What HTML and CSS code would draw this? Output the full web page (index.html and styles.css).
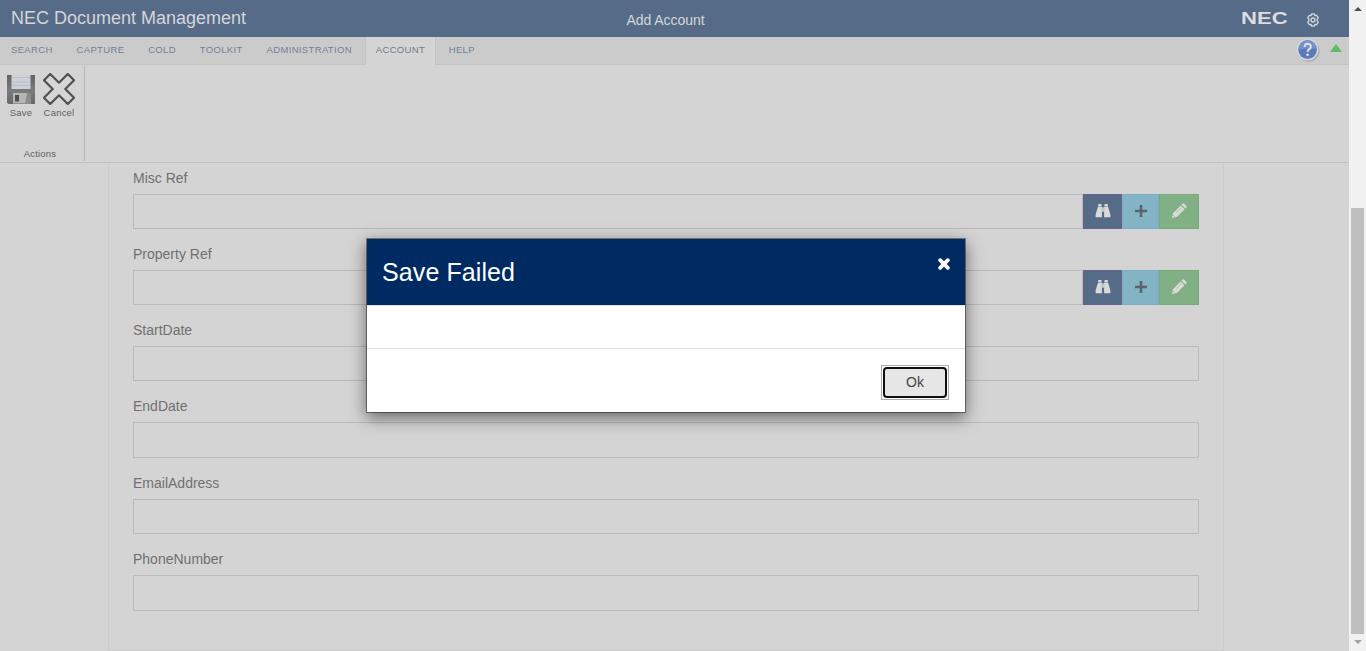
FILE: index.html
```html
<!DOCTYPE html>
<html lang="en">
<head>
<meta charset="utf-8">
<title>Add Account</title>
<link rel="stylesheet" href="styles.css">
</head>
<body>
<svg class="defs" width="0" height="0">
  <symbol id="binoculars" viewBox="0 0 16 14">
    <path fill="currentColor" d="M3.200 0h3.300v2H3.200zM9.500 0h3.300v2H9.500zM3 2.500h3.900V13.200H.600V10.500zM9.100 2.500H13L15.400 10.500v2.700H9.100zM7.200 3.200h1.600v4.600H7.200z"/>
  </symbol>
  <symbol id="plus" viewBox="0 0 12 12"><path fill="currentColor" d="M4.700 0h2.600v4.700H12v2.600H7.300V12H4.700V7.300H0V4.700h4.700z"/></symbol>
  <symbol id="pencil" viewBox="0 0 16 16">
    <path fill="currentColor" d="M1 15l1-4.800L9.700 2.500l3.800 3.800L5.800 14zM10.500 1.700l1-1q.9-.7 1.800.1l1.900 1.900q.8.900.1 1.800l-1 1z"/>
    <path d="M5.500 9.700L10 5.200" stroke="#82b085" stroke-width=".6"/>
    <path d="M2.200 12.200l1.600 1.600" stroke="#82b085" stroke-width=".8"/>
  </symbol>
</svg>
<div class="window">
  <div class="app">
    <header class="topbar">
      <div class="brand">NEC Document Management</div>
      <div class="page-title">Add Account</div>
      <div class="top-right">
        <span class="logo">NEC</span>
        <svg class="gear" viewBox="0 0 14 14" width="14" height="14" fill="none" stroke="currentColor" stroke-width="1.300" stroke-linejoin="round">
          <path d="M5.500 1h3l.5 1.700 1.700-.4 1.600 2.600L11.100 6.200v1.600l1.200 1.300-1.600 2.600-1.700-.4L8.500 13h-3L5 11.300l-1.700.4-1.600-2.600 1.200-1.300V6.200L1.700 4.900l1.600-2.600 1.700.4z"/>
          <circle cx="7" cy="7" r="2"/>
        </svg>
      </div>
    </header>
    <nav class="tabs">
      <span class="tab">SEARCH</span><span class="tab">CAPTURE</span><span class="tab">COLD</span><span class="tab">TOOLKIT</span><span class="tab">ADMINISTRATION</span><span class="tab active">ACCOUNT</span><span class="tab">HELP</span>
      <div class="tab-tools">
        <svg class="help" viewBox="0 0 24 24" width="24" height="24">
          <circle cx="12.500" cy="12.800" r="11" fill="#a7a7ab"/>
          <circle cx="11.600" cy="11.600" r="11" fill="#d3d5dc"/>
          <circle cx="11.600" cy="11.600" r="9.300" fill="#5b7abb"/>
          <path d="M2.400 12a9.200 9.200 0 0 1 18.400-1q-9-2-18.400 1z" fill="#7591c8"/>
          <path d="M8.600 9q0-3.200 3.100-3.200T14.800 8.700q0 1.500-1.600 2.500t-1.600 2.600" fill="none" stroke="#dedee2" stroke-width="2.100"/>
          <circle cx="11.600" cy="16.800" r="1.400" fill="#dedee2"/>
        </svg>
        <span class="collapse"></span>
      </div>
    </nav>
    <div class="ribbon">
      <div class="group">
        <div class="actions">
          <div class="action">
            <svg viewBox="0 0 28 30" width="28" height="30">
              <defs><linearGradient id="disk" x1="0" y1="0" x2="0" y2="1"><stop offset="0" stop-color="#646464"/><stop offset=".55" stop-color="#7b7b7b"/><stop offset="1" stop-color="#686868"/></linearGradient></defs>
              <path d="M0 1h28v29H1.500L0 28.500z" fill="url(#disk)"/>
              <path d="M4.500 1h19v14h-19z" fill="#cbd1d7"/>
              <path d="M5 3.500h18M5 8h18M5 11.500h18" stroke="#b9c1ca"/>
              <path d="M6 19h18v10.500H6z" fill="#b5b5b5"/>
              <path d="M8 21h4v6.500H8z" fill="#505050"/>
              <path d="M20 19h4v10.500h-6z" fill="#8c8c8c"/>
            </svg>
            <span>Save</span>
          </div>
          <div class="action">
            <svg viewBox="0 0 32 32" width="32" height="32"><path d="M7.200 1L16 9.700 24.800 1 31 7.200 22.300 16 31 24.800 24.800 31 16 22.300 7.200 31 1 24.800 9.700 16 1 7.200z" fill="#d6d6d6" stroke="#515151" stroke-width="2.200" stroke-linejoin="round"/></svg>
            <span>Cancel</span>
          </div>
        </div>
        <div class="group-name">Actions</div>
      </div>
    </div>
    <main class="content">
      <form class="panel">
        <div class="field"><label>Misc Ref</label><div class="row"><div class="input"></div>
          <span class="btn find"><svg width="16" height="14"><use href="#binoculars"/></svg></span><span class="btn add"><svg width="12" height="12"><use href="#plus"/></svg></span><span class="btn edit"><svg width="16" height="16"><use href="#pencil"/></svg></span></div></div>
        <div class="field"><label>Property Ref</label><div class="row"><div class="input"></div>
          <span class="btn find"><svg width="16" height="14"><use href="#binoculars"/></svg></span><span class="btn add"><svg width="12" height="12"><use href="#plus"/></svg></span><span class="btn edit"><svg width="16" height="16"><use href="#pencil"/></svg></span></div></div>
        <div class="field"><label>StartDate</label><div class="row"><div class="input"></div></div></div>
        <div class="field tall"><label>EndDate</label><div class="row"><div class="input"></div></div></div>
        <div class="field"><label>EmailAddress</label><div class="row"><div class="input"></div></div></div>
        <div class="field tall"><label>PhoneNumber</label><div class="row"><div class="input"></div></div></div>
      </form>
    </main>
  </div>
  <div class="scrollbar"><span class="arrow up"></span><span class="thumb"></span><span class="arrow down"></span></div>
</div>
<div class="modal" role="dialog">
  <div class="modal-head">
    <h1>Save Failed</h1>
    <svg class="close" viewBox="0 0 12 12" width="12" height="12"><path d="M2.200 2.200l7.600 7.600M9.800 2.200L2.200 9.800" stroke="#fff" stroke-width="3.800" stroke-linecap="round"/></svg>
  </div>
  <div class="modal-body"></div>
  <div class="modal-foot"><button class="ok"><span>Ok</span></button></div>
</div>
</body>
</html>
```
FILE: styles.css
```css
* { box-sizing: border-box; }
body { margin: 0; height: 651px; overflow: hidden; font-family: "Liberation Sans", Arial, sans-serif; background: #d4d4d4; }
svg { display: block; flex: none; }
.defs { position: absolute; }
.window { display: flex; height: 651px; }
.app { width: 1349px; display: flex; flex-direction: column; }
.topbar { height: 37px; flex: none; background: #566b87; color: #d4d6d9; display: grid; grid-template-columns: 1fr auto 1fr; padding: 0 29px 0 11px; }
.brand { font-size: 18px; line-height: 37px; white-space: nowrap; }
.page-title { font-size: 14px; line-height: 40px; letter-spacing: -.05px; }
.top-right { display: flex; justify-content: flex-end; align-items: flex-start; }
.logo { font-size: 17px; line-height: 18px; font-weight: bold; width: 35px; margin: 10px 30px 0 0; transform: scaleX(1.300); transform-origin: 0 0; color: #dcdddf; }
.gear { margin-top: 13px; }
.tabs { height: 28px; flex: none; display: flex; background: #cbcbcb; border-bottom: 1px solid #c4c4c4; }
.tab { font-size: 9.500px; letter-spacing: .35px; line-height: 25px; color: #71819a; padding: 0 11.800px 0 12px; }
.tab:first-child { padding-left: 11px; }
.tab.active { height: 28px; background: #d4d4d4; color: #707b89; border: solid #c4c4c4; border-width: 0 1px; padding: 0 9.500px 0 10px; margin: 0 1px; }
.tab-tools { margin-left: auto; display: flex; gap: 10px; padding-right: 7px; }
.help { margin-top: .5px; }
.collapse { width: 0; height: 0; border: solid transparent; border-width: 0 6px 8px; border-bottom-color: #5dbb63; margin-top: 7px; }
.ribbon { height: 98px; flex: none; display: flex; border-bottom: 1px solid #c1c1c1; padding-top: 1px; }
.group { width: 85px; height: 95px; border-right: 1px solid #b7b7b7; display: flex; flex-direction: column; justify-content: space-between; color: #606060; font-size: 9.500px; letter-spacing: .2px; line-height: 12px; }
.actions { display: flex; gap: 8px; padding: 7px 0 0 7px; align-items: flex-end; }
.action { display: flex; flex-direction: column; align-items: center; gap: 2px; }
.action:first-child { width: 28px; }
.action:last-child { width: 32px; }
.action:first-child svg { margin-bottom: 1px; }
.group-name { text-align: center; padding-right: 4px; margin-bottom: 1px; }
.content { padding: 0 125px 0 108px; flex: 1; }
.panel { height: 488px; border: 1px solid #cbcbcb; border-top: 0; padding: 6px 24px 0; }
.field { height: 76px; font-size: 14px; color: #707070; }
.field.tall { height: 77px; }
.field label { display: block; height: 25px; line-height: 18px; }
.row { height: 35px; display: flex; }
.tall .row { height: 36px; }
.input { flex: 1; border: 1px solid #bababa; }
.btn { display: flex; align-items: center; justify-content: center; border: 1px solid; color: #dadada; }
.btn svg { margin-bottom: 1px; }
.find { width: 39px; background: #566b87; border-color: #6d6091; }
.add { width: 37px; background: #82b4c6; border-color: #7bafc0; color: #5d6468; }
.edit { width: 40px; background: #82b085; border-color: #78aa7a; }
.scrollbar { width: 17px; background: #f1f1f1; display: flex; flex-direction: column; align-items: center; }
.arrow { border: 4px solid transparent; width: 0; height: 0; }
.up { border-top: 0; border-bottom: 4px solid #505050; margin-top: 7px; }
.down { border-bottom: 0; border-top: 4px solid #a3a3a3; margin-top: 6px; }
.thumb { width: 13px; height: 426px; margin-top: 197px; background: #bfbfbf; }
.modal { position: absolute; left: 366px; top: 238px; width: 600px; height: 175px; background: #fff; background-clip: padding-box; border: 1px solid rgba(0,0,0,.4); box-shadow: 0 5px 15px rgba(0,0,0,.5); }
.modal-head { height: 67px; background: #002b62; border-bottom: 1px solid #e5e5e5; display: flex; justify-content: space-between; padding: 0 15px; color: #fff; }
.modal-head h1 { font-size: 25px; letter-spacing: .1px; font-weight: normal; line-height: 67px; margin: 0; }
.close { margin-top: 19px; }
.modal-body { height: 42px; }
.modal-foot { border-top: 1px solid #dee2e6; height: 64px; display: flex; justify-content: flex-end; padding: 16px 16px 0 0; }
.ok { width: 68px; height: 35px; border: 1px solid #adadad; background: #fff; padding: 1px; display: flex; }
.ok span { flex: 1; height: 31px; border: 2px solid #101010; border-radius: 4px; background: #e6e6e6; font: 14px/26px "Liberation Sans", Arial, sans-serif; color: #444; }
```
